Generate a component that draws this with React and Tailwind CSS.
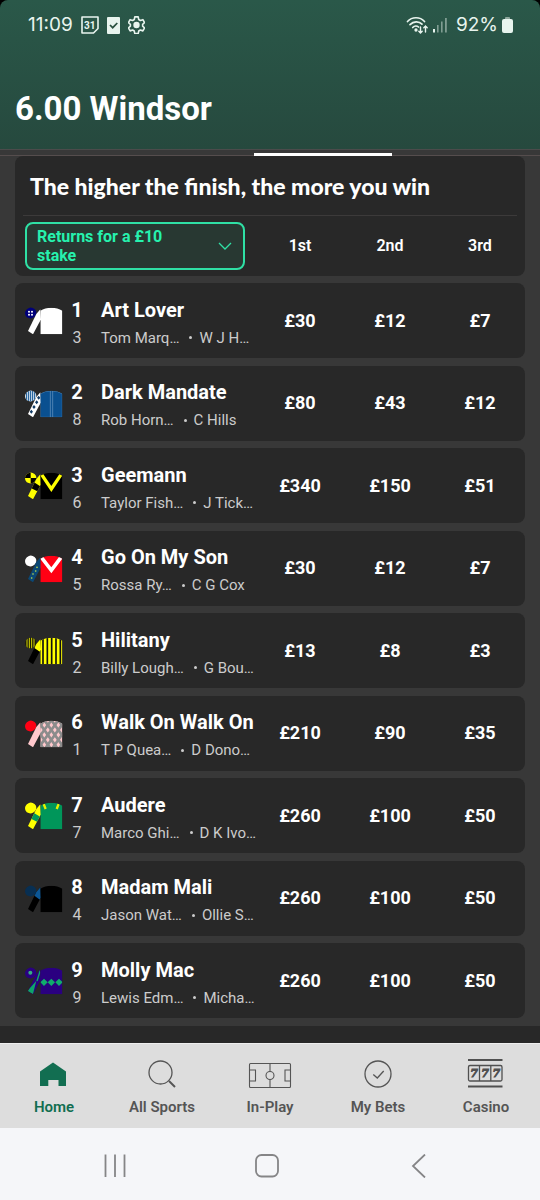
import React, { useState } from 'react';

const runners = [
  { no: 1, draw: 3, name: 'Art Lover', jockey: 'Tom Marq…', trainer: 'W J H…', returns: ['£30', '£12', '£7'] },
  { no: 2, draw: 8, name: 'Dark Mandate', jockey: 'Rob Horn…', trainer: 'C Hills', returns: ['£80', '£43', '£12'] },
  { no: 3, draw: 6, name: 'Geemann', jockey: 'Taylor Fish…', trainer: 'J Tick…', returns: ['£340', '£150', '£51'] },
  { no: 4, draw: 5, name: 'Go On My Son', jockey: 'Rossa Ry…', trainer: 'C G Cox', returns: ['£30', '£12', '£7'] },
  { no: 5, draw: 2, name: 'Hilitany', jockey: 'Billy Lough…', trainer: 'G Bou…', returns: ['£13', '£8', '£3'] },
  { no: 6, draw: 1, name: 'Walk On Walk On', jockey: 'T P Quea…', trainer: 'D Dono…', returns: ['£210', '£90', '£35'] },
  { no: 7, draw: 7, name: 'Audere', jockey: 'Marco Ghi…', trainer: 'D K Ivo…', returns: ['£260', '£100', '£50'] },
  { no: 8, draw: 4, name: 'Madam Mali', jockey: 'Jason Wat…', trainer: 'Ollie S…', returns: ['£260', '£100', '£50'] },
  { no: 9, draw: 9, name: 'Molly Mac', jockey: 'Lewis Edm…', trainer: 'Micha…', returns: ['£260', '£100', '£50'] },
];

const BODY = 'M46 14 Q60 5 79 5 Q98 5 112 14 V85 H46 Z';
const SLEEVE = 'M46 10 L48 40 L24 85 L9 75 L34 24 Z';

// base colours plus the pattern drawn over each part
const silks = {
  1: {
    cap: '#00007a', sleeve: '#fff', body: '#fff',
    capArt: <g fill="#fff"><circle cx="12" cy="17" r="3" /><circle cx="21" cy="17" r="3" /><circle cx="12" cy="26" r="3" /><circle cx="21" cy="26" r="3" /></g>,
  },
  2: {
    cap: '#dfe9f2', sleeve: '#fff', body: '#0a5090',
    capArt: <path d="M5 4V40M11 4V40M17 4V40M23 4V40M29 4V40" stroke="#0a5090" strokeWidth="3" />,
    sleeveArt: <path d="M19 62l5 6-5 6-5-6zM27 48l5 6-5 6-5-6zM35 34l5 6-5 6-5-6zM41 20l5 6-5 6-5-6z" fill="#123c66" />,
    bodyArt: <path d="M76 4V85M83 4V85M46 14 Q60 5 79 5 Q98 5 112 14 V85 H46 Z" stroke="#6e9cc4" strokeWidth="2" fill="none" />,
  },
  3: {
    cap: '#ff0', sleeve: '#ff0', body: '#000',
    capArt: <path d="M17 21H0V4H17ZM17 21H36V40H17Z" fill="#000" />,
    sleeveArt: <path d="M27 34L49 48L40 62L19 52Z" fill="#000" />,
    bodyArt: <path d="M50 11L79 54L108 11" stroke="#ff0" strokeWidth="10" fill="none" />,
  },
  4: {
    cap: '#fff', sleeve: '#0b4774', body: '#ff0014',
    sleeveArt: <g fill="#c5e34a"><circle cx="20" cy="72" r="2.5" /><circle cx="24" cy="60" r="2.5" /><circle cx="32" cy="51" r="2.5" /><circle cx="36" cy="40" r="2.5" /></g>,
    bodyArt: <path d="M49 10L79 49L108 10" stroke="#fff" strokeWidth="11" fill="none" />,
  },
  5: {
    cap: '#1b1b0a', sleeve: '#000', body: '#ff0',
    capArt: <path d="M6 4V40M13 4V40M20 4V40M27 4V40" stroke="#d8d800" strokeWidth="3" />,
    sleeveArt: <path d="M28 36L49 50V8H34Z" fill="#ff0" />,
    bodyArt: <path d="M54 4V85M67 4V85M80 4V85M93 4V85M106 4V85" stroke="#111" strokeWidth="5" />,
  },
  6: {
    cap: '#ff0014', sleeve: '#ffc8cc', body: '#ffc8cc',
    bodyArt: (
      <g fill="none" stroke="#8c8c8c" strokeWidth="8">
        <path d="M36 2L130 134M57 2L151 134M78 2L172 134M99 2L193 134M15 2L109 134M-6 2L88 134" />
        <path d="M122 2L28 134M101 2L7 134M80 2L-14 134M59 2L-35 134M143 2L49 134M164 2L70 134" />
      </g>
    ),
  },
  7: {
    cap: '#ff0', sleeve: '#ff0', body: '#00965a',
    sleeveArt: <path d="M27 36L49 49L39 64L18 53Z" fill="#00965a" />,
    bodyArt: <path d="M56 9L62 24M101 9L95 24" stroke="#e6f000" strokeWidth="7" />,
  },
  8: {
    cap: '#082f52', sleeve: '#000', body: '#000',
    sleeveArt: <path d="M26 34L49 50V8H34Z" fill="#0c5796" />,
  },
  9: {
    cap: '#2a0080', sleeve: '#2a0080', body: '#2a0080',
    capArt: <circle cx="16" cy="20" r="6" fill="#35b080" />,
    sleeveArt: <path d="M44 12L46 20L38 46L34 44ZM34 44L24 84L6 76Z" fill="#0ea56a" />,
    bodyArt: <path d="M57 38l11 11-11 11-11-11zM79 38l11 11-11 11-11-11zM102 38l11 11-11 11-11-11z" fill="#10ad6c" />,
  },
};

const Silk = ({ no }) => {
  const s = silks[no];
  return (
    <svg viewBox="0 0 114 87" className="h-[29px] w-[38px] shrink-0" aria-hidden="true">
      <clipPath id={`cap-${no}`}><ellipse cx="17" cy="21" rx="17" ry="16" transform="rotate(-25 17 21)" /></clipPath>
      <clipPath id={`sleeve-${no}`}><path d={SLEEVE} /></clipPath>
      <clipPath id={`body-${no}`}><path d={BODY} /></clipPath>
      <g clipPath={`url(#cap-${no})`}><rect width="40" height="44" fill={s.cap} />{s.capArt}</g>
      <g clipPath={`url(#sleeve-${no})`}><rect width="60" height="87" fill={s.sleeve} />{s.sleeveArt}</g>
      <g clipPath={`url(#body-${no})`}><rect width="114" height="87" fill={s.body} />{s.bodyArt}</g>
    </svg>
  );
};

const navItems = [
  {
    label: 'Home',
    icon: <path d="M21 6.5L34 15.5V30H26.5V24H16.3V30H8V15.5Z" fill="#126e51" />,
  },
  {
    label: 'All Sports',
    icon: <g fill="none" stroke="#555"><circle cx="20.5" cy="16.5" r="11.5" strokeWidth="1.3" /><path d="M29 25L35 31" strokeWidth="2" /></g>,
  },
  {
    label: 'In-Play',
    icon: (
      <g fill="none" stroke="#555" strokeWidth="1.1">
        <rect x="1.5" y="7.5" width="41" height="24" rx="1" />
        <path d="M1.5 14H7.5V25H1.5M42.5 14H37V25H42.5M22 7.5V15.5M22 23.5V31.5" />
        <circle cx="22" cy="19.5" r="4" />
      </g>
    ),
  },
  {
    label: 'My Bets',
    icon: <g fill="none" stroke="#555" strokeWidth="1.3"><circle cx="22" cy="18" r="13" /><path d="M17.3 18.5L21.3 22L27.7 15" /></g>,
  },
  {
    label: 'Casino',
    icon: (
      <g fill="none" stroke="#505050">
        <path d="M4 4H38.5M4 30.5H38.5" strokeWidth="2" />
        <rect x="4.5" y="9.5" width="33.5" height="15.5" rx="1.5" strokeWidth="1.3" />
        <path d="M15.5 9.5V25M26.8 9.5V25" strokeWidth="1.3" />
        <g fill="#505050" strokeWidth="0.9" fontSize="11" fontWeight="700" fontStyle="italic" fontFamily="DejaVu Serif, serif" textAnchor="middle">
          <text x="10" y="21.3">7</text>
          <text x="21.2" y="21.3">7</text>
          <text x="32.4" y="21.3">7</text>
        </g>
      </g>
    ),
  },
];

const StatusBar = () => (
  <div className="flex h-[50px] items-center justify-between pr-[27px] pl-7 font-['Inter',sans-serif] text-[19px] text-[#e8f4ee]">
    <div className="flex items-center gap-2">
      <span>11:09</span>
      <svg viewBox="0 0 18 18" className="h-[18px] w-[18px]" aria-hidden="true">
        <path d="M1 1H17V12.5L12.5 17H1Z" fill="none" stroke="currentColor" strokeWidth="1.6" strokeLinejoin="round" />
        <text x="8.8" y="12.5" fontSize="10" fontWeight="700" fill="currentColor" textAnchor="middle" fontFamily="Roboto, sans-serif">31</text>
      </svg>
      <svg viewBox="0 0 13 17" className="h-[17px] w-[13px]" aria-hidden="true">
        <rect width="13" height="17" rx="1" fill="currentColor" />
        <path d="M3 8L5.7 10.7L10.3 6" fill="none" stroke="#29503f" strokeWidth="1.7" />
      </svg>
      <svg viewBox="2 2 20 21" className="h-[18px] w-[17px]" fill="none" stroke="currentColor" strokeWidth="1.9" strokeLinejoin="round" aria-hidden="true">
        <path d="M10 3h4l.6 3 2 1.2 2.9-1 2 3.5-2.3 2v2.2l2.3 2-2 3.5-2.9-1-2 1.2-.6 3h-4l-.6-3-2-1.2-2.9 1-2-3.5 2.3-2v-2.2l-2.3-2 2-3.5 2.9 1 2-1.2z" />
        <circle cx="12" cy="12.5" r="2.8" fill="currentColor" />
      </svg>
    </div>
    <div className="flex items-center gap-1">
      <svg viewBox="0 0 23 18" className="h-[18px] w-[23px]" fill="none" stroke="currentColor" strokeWidth="1.7" strokeLinecap="round" aria-hidden="true">
        <path d="M1.5 5.5C6 .5 14 .5 18.5 5.5M4 8.7C7.5 5 13 5 16 8.2M6.7 11.5C8.5 9.6 11 9.6 12.5 11" />
        <circle cx="10" cy="14" r=".8" fill="currentColor" />
        <path d="M14.5 11V17M12.8 15.3L14.5 17L16.2 15.3M19.5 16V10M17.8 11.7L19.5 10L21.2 11.7" strokeWidth="1.4" />
      </svg>
      <svg viewBox="0 0 15 16" className="h-4 w-[15px]" fill="currentColor" aria-hidden="true">
        <rect x="0" y="12" width="2" height="3.5" />
        <g opacity=".45"><rect x="4" y="8" width="1.6" height="7.5" /><rect x="8" y="4.5" width="1.6" height="11" /><rect x="12" y="1" width="1.8" height="14.5" /></g>
      </svg>
      <span className="ml-1">92%</span>
      <svg viewBox="0 0 11 16" className="h-4 w-[11px]" aria-hidden="true">
        <rect x="3" y="0" width="5" height="3" rx="1" fill="#8ea69c" />
        <rect x="0" y="2" width="11" height="14" rx="2" fill="currentColor" />
      </svg>
    </div>
  </div>
);

const App = () => {
  const [stake, setStake] = useState('10');

  return (
    <div className="flex min-h-screen flex-col bg-black font-['Roboto',sans-serif]">
      <header className="h-[149px] rounded-t-lg bg-linear-to-b from-[#2a5849] to-[#26493e]">
        <StatusBar />
        <h1 className="px-[15px] pt-9 text-[33px] leading-[46px] font-bold text-white">6.00 Windsor</h1>
      </header>

      <div className="flex h-[7px] items-end justify-center border-y border-t-[#4b4b4b] border-b-[#554d4d] bg-[#383838] pl-[106px]">
        <span className="-mb-px h-[3px] w-[138px] bg-white" />
      </div>

      <main className="flex flex-1 flex-col bg-[#383838] px-[15px] pb-2">
        <table className="flex flex-1 flex-col">
          <caption className="block rounded-t-lg bg-[#282828] px-2 text-left">
            <h2 className="border-b border-[#3c3a3a] px-[7px] pt-3.5 pb-[13px] font-['Lato',sans-serif] text-[23px] leading-8 font-black text-white">
              The higher the finish, the more you win
            </h2>
          </caption>
          <thead className="mb-[7px] block rounded-b-lg bg-[#282828]">
            <tr className="grid h-[60px] grid-cols-[minmax(0,1fr)_90px_90px_90px] items-center">
              <th className="relative px-2.5 text-left">
                <select
                  aria-label="Returns stake"
                  value={stake}
                  onChange={(e) => setStake(e.target.value)}
                  className="block h-12 w-full appearance-none rounded-lg border-2 border-[#2fe0a5] bg-[#283832] pr-16 pl-2.5 text-base leading-[19px] font-bold whitespace-normal text-[#26f2ae]"
                >
                  <option value="10">Returns for a £10 stake</option>
                  <option value="20">Returns for a £20 stake</option>
                </select>
                <svg viewBox="0 0 14 8" className="pointer-events-none absolute top-5 right-[23px] h-2 w-3.5" fill="none" stroke="#2fe0a5" strokeWidth="1.3" aria-hidden="true">
                  <path d="M1 1L7 7L13 1" />
                </svg>
              </th>
              {['1st', '2nd', '3rd'].map((place) => (
                <th key={place} className="text-center text-base font-semibold text-white">{place}</th>
              ))}
            </tr>
          </thead>

          <tbody className="flex flex-1 flex-col justify-between">
            {runners.map((r) => (
              <tr key={r.no} className="grid h-[75px] grid-cols-[minmax(0,1fr)_90px_90px_90px] items-center rounded-lg bg-[#282828]">
                <td className="flex items-center pl-2.5">
                  <Silk no={r.no} />
                  <div className="flex w-7 shrink-0 flex-col pt-1.5 text-center leading-7">
                    <span className="text-xl font-bold text-white">{r.no}</span>
                    <span className="text-[16px] text-[#ccc]">{r.draw}</span>
                  </div>
                  <div className="flex flex-col pt-1.5 pl-2.5 leading-7 whitespace-nowrap">
                    <span className="text-xl font-bold text-white">{r.name}</span>
                    <div className="flex items-center text-[15px] text-[#ccc]">
                      <span>{r.jockey}</span>
                      <span className="mr-[7px] ml-2.5 h-[3px] w-[3px] rounded-full bg-[#ccc]" />
                      <span>{r.trainer}</span>
                    </div>
                  </div>
                </td>
                {r.returns.map((value, i) => (
                  <td key={i} className="text-center text-lg font-bold text-white">{value}</td>
                ))}
              </tr>
            ))}
          </tbody>
        </table>
      </main>

      <div className="h-[17px] bg-[#282828]" />

      <nav className="flex h-[85px] border-t border-[#eee] bg-[#ddd] pt-3">
        {navItems.map((item, i) => (
          <a key={item.label} href="#" className="flex flex-1 flex-col items-center gap-1">
            <svg viewBox="0 0 44 36" className="h-9 w-11" aria-hidden="true">{item.icon}</svg>
            <span className={`text-[15px] leading-[22px] font-semibold ${i === 0 ? 'text-[#126e51]' : 'text-[#555]'}`}>{item.label}</span>
          </a>
        ))}
      </nav>

      <div className="flex h-[72px] items-center justify-center bg-[#f5f6f9] pt-1 pr-1.5">
        <button aria-label="Recent apps" className="flex h-full w-38 items-center justify-center">
          <svg viewBox="0 0 24 24" className="h-6 w-6" stroke="#858587" strokeWidth="1.8"><path d="M2.5 .5V23M12 .5V23M21.5 .5V23" /></svg>
        </button>
        <button aria-label="Home screen" className="flex h-full w-38 items-center justify-center">
          <svg viewBox="0 0 24 24" className="h-6 w-6" fill="none" stroke="#858587" strokeWidth="1.8"><rect x="1" y="1" width="22" height="21.5" rx="5.5" /></svg>
        </button>
        <button aria-label="Back" className="flex h-full w-38 items-center justify-center">
          <svg viewBox="0 0 24 24" className="h-6 w-6" fill="none" stroke="#858587" strokeWidth="1.8"><path d="M18 .5L6 12L18 23.5" /></svg>
        </button>
      </div>
    </div>
  );
};

export default App;
